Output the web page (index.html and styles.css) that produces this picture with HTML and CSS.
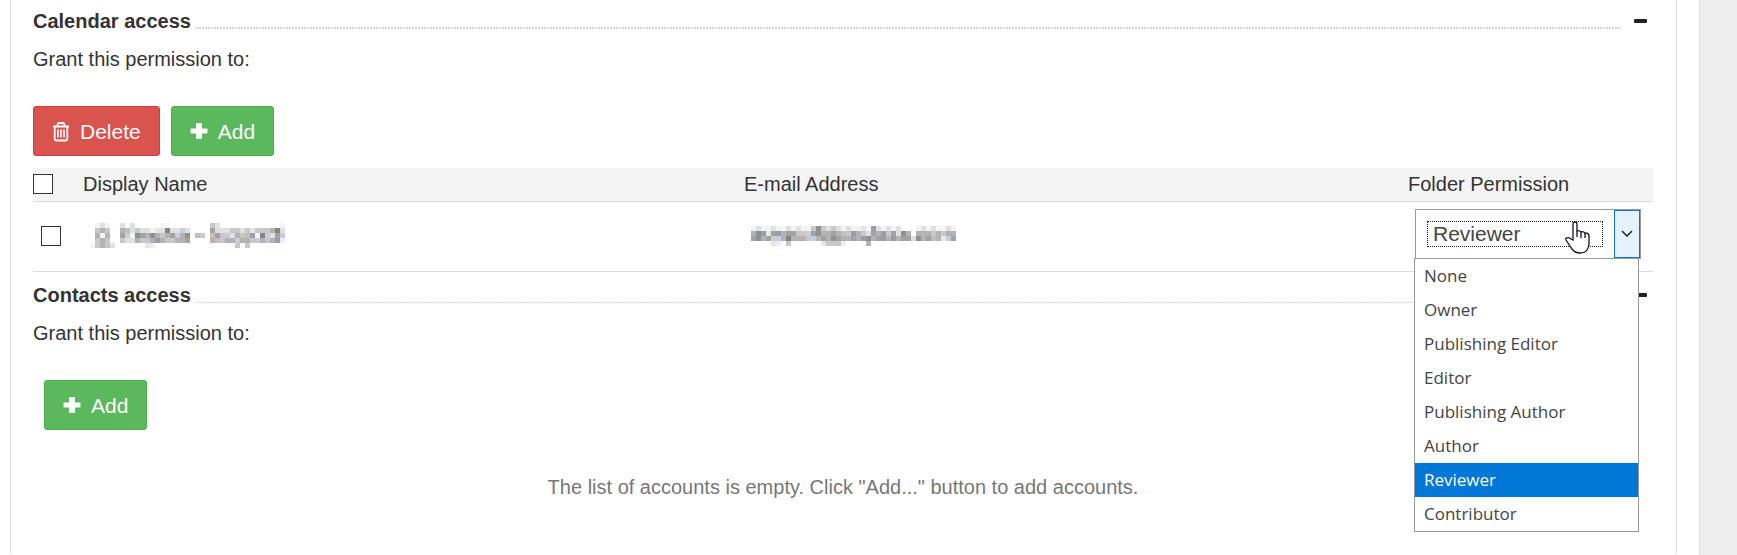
FILE: index.html
```
<!DOCTYPE html>
<html lang="en">
<head>
    <meta charset="UTF-8">
    <meta name="viewport" content="width=device-width, initial-scale=1.0">
    <title>Folder permissions</title>
    <link rel="stylesheet" href="styles.css">
</head>
<body>
    <main class="page">
        <div class="panel">
            <section class="section">
                <div class="section-head">
                    <h2>Calendar access</h2>
                    <span class="dots"></span>
                    <button class="collapse" type="button" aria-label="Collapse calendar access"></button>
                </div>
                <p class="hint">Grant this permission to:</p>
                <div class="toolbar">
                    <button class="btn btn-danger" type="button">
                        <svg class="icon" viewBox="0 0 18 20" aria-hidden="true" fill="none" stroke="#fff">
                            <path d="M1 4.500h16M5.500 4V3q0-2 2-2h3q2 0 2 2v1" stroke-width="1.800"/>
                            <path d="M2.700 5v11.500q0 2 2 2h8.600q2 0 2-2V5" stroke-width="1.800"/>
                            <path d="M6 7.500v8M9 7.500v8M12 7.500v8" stroke-width="1.600"/>
                        </svg>
                        Delete
                    </button>
                    <button class="btn btn-success" type="button">
                        <svg class="icon" viewBox="0 0 18 20" aria-hidden="true" fill="#fff">
                            <path d="M7 1h4q1 0 1 1v4.500h4.500q1 0 1 1v3q0 1-1 1H12V16q0 1-1 1H7q-1 0-1-1v-4.500H1.500q-1 0-1-1v-3q0-1 1-1H6V2q0-1 1-1z"/>
                        </svg>
                        Add
                    </button>
                </div>
                <table class="accounts">
                    <thead>
                        <tr>
                            <th class="col-check"><input type="checkbox" aria-label="Select all"></th>
                            <th class="col-name">Display Name</th>
                            <th>E-mail Address</th>
                            <th class="col-permission">Folder Permission</th>
                        </tr>
                    </thead>
                    <tbody>
                        <tr>
                            <td><input type="checkbox" aria-label="Select account"></td>
                            <td><svg class="mosaic" id="hiddenName" role="img" aria-label="Hidden name"></svg></td>
                            <td><svg class="mosaic" id="hiddenMail" role="img" aria-label="Hidden address"></svg></td>
                            <td>
                                <div class="dropdown">
                                    <select aria-label="Folder Permission">
                                        <option>None</option>
                                        <option>Owner</option>
                                        <option>Publishing Editor</option>
                                        <option>Editor</option>
                                        <option>Publishing Author</option>
                                        <option>Author</option>
                                        <option selected>Reviewer</option>
                                        <option>Contributor</option>
                                    </select>
                                    <span class="focus-box"></span>
                                    <span class="arrow">
                                        <svg width="12" height="7" viewBox="0 0 12 7" fill="none" stroke="#222" stroke-width="1.500"><path d="M1 1l5 5 5-5"/></svg>
                                    </span>
                                    <ul class="menu">
                                        <li>None</li>
                                        <li>Owner</li>
                                        <li>Publishing Editor</li>
                                        <li>Editor</li>
                                        <li>Publishing Author</li>
                                        <li>Author</li>
                                        <li class="active">Reviewer</li>
                                        <li>Contributor</li>
                                    </ul>
                                    <svg class="pointer" viewBox="0 0 26 33" aria-hidden="true">
                                        <path d="M9 19V3q0-2 2-2t2 2v7q2-1 4 1 2-1 4 1 4 0 4 3V22q0 4-2 7-2 3-7 3-5 0-8-4l-6-9q-1-2 1-2 2-1 4 1z" fill="#fff" stroke="#111122" stroke-width="1.300"/>
                                        <path d="M13 10v6M17 11v6M21 12v5" fill="none" stroke="#111122" stroke-width="1.300"/>
                                    </svg>
                                </div>
                            </td>
                        </tr>
                    </tbody>
                </table>
            </section>

            <section class="section">
                <div class="section-head">
                    <h2>Contacts access</h2>
                    <span class="dots thin"></span>
                    <button class="collapse" type="button" aria-label="Collapse contacts access"></button>
                </div>
                <p class="hint">Grant this permission to:</p>
                <div class="toolbar indent">
                    <button class="btn btn-success" type="button">
                        <svg class="icon" viewBox="0 0 18 20" aria-hidden="true" fill="#fff">
                            <path d="M7 1h4q1 0 1 1v4.500h4.500q1 0 1 1v3q0 1-1 1H12V16q0 1-1 1H7q-1 0-1-1v-4.500H1.500q-1 0-1-1v-3q0-1 1-1H6V2q0-1 1-1z"/>
                        </svg>
                        Add
                    </button>
                </div>
                <p class="empty">The list of accounts is empty. Click "Add..." button to add accounts.</p>
            </section>
        </div>
    </main>
    <script src="mosaic.js"></script>
</body>
</html>
```
FILE: styles.css
```
* { box-sizing: border-box; }
body { margin: 0; min-height: 100vh; display: flex; background: #eee; color: #333; font-family: Arial, 'Liberation Sans', sans-serif; font-size: 20px; line-height: 28px; }
h2, p, ul { margin: 0; padding: 0; }
h2 { font-size: 20px; line-height: 28px; }
button, select { font-family: inherit; }

.page { flex: 1; margin-right: 37px; padding: 0 22px 0 10px; background: #fff; border-right: 1px solid #ddd; }
.panel { padding: 0 23px 54px 22px; border: 1px solid #ddd; border-width: 0 1px; border-radius: 0 0 4px 4px; }

.section { padding-top: 7px; }
.section + .section { padding-top: 9px; }
.section-head { display: flex; align-items: center; gap: 5px; }
.dots { flex: 1; height: 2px; margin: 14px 8px 0 0; background: repeating-linear-gradient(90deg, #d6d6d6 0 2px, #fff 2px 3px); }
.dots.thin { height: 1px; }
.collapse { width: 13px; height: 4px; margin-right: 6px; padding: 0; border: none; border-radius: 1px; background: #222; cursor: pointer; }
.hint { margin-top: 10px; }

.toolbar { display: flex; gap: 11px; margin-top: 33px; }
.toolbar.indent { padding-left: 11px; }
.btn { display: flex; align-items: center; gap: 10px; height: 50px; padding: 1px 18px 0; border: 1px solid; border-radius: 3px; color: #fff; font-size: 21px; cursor: pointer; }
.btn-danger { background: #d9534f; border-color: #d43f3a; }
.btn-success { background: #5cb85c; border-color: #4cae4c; }
.icon { width: 18px; height: 20px; }

.accounts { width: 100%; margin-top: 12px; border-spacing: 0; table-layout: fixed; }
th { height: 34px; padding: 0 0 2px; text-align: left; font-weight: normal; background: #f4f4f4; border-bottom: 1px solid #ddd; }
td { height: 70px; padding: 0 0 2px 7px; border-bottom: 1px solid #ddd; }
.col-check { width: 50px; }
.col-name { width: 661px; }
.col-permission { width: 245px; }
input[type="checkbox"] { appearance: none; display: block; width: 20px; height: 20px; margin: 0; border: 1px solid #333; background: #fff; }
td input[type="checkbox"] { margin-left: 1px; }
.mosaic { display: block; }

.dropdown { position: relative; width: 226px; margin-bottom: 4px; }
.dropdown select { appearance: none; display: block; width: 100%; height: 50px; padding: 0 40px 0 17px; border: 1px solid #999; border-radius: 0; background: #fff; color: #444; font-size: 21px; outline: none; }
.focus-box { position: absolute; top: 12px; right: 38px; bottom: 12px; left: 12px; border: 1px dotted #222; pointer-events: none; }
.arrow { position: absolute; top: 1px; right: 1px; bottom: 1px; width: 26px; display: flex; align-items: center; justify-content: center; background: #e5f1fb; border: 1px solid #0078d7; pointer-events: none; }
.menu { position: absolute; top: 49px; left: -1px; z-index: 1; width: 225px; list-style: none; background: #fff; border: 1px solid #999; color: #444; font-family: 'Open Sans', 'Noto Sans', sans-serif; font-size: 17px; line-height: 34px; }
.menu li { padding-left: 9px; }
.menu .active { background: #0078d7; color: #fff; }
.pointer { position: absolute; top: 12px; left: 149px; z-index: 2; width: 26px; height: 33px; pointer-events: none; }

.empty { margin-top: 43px; text-align: center; color: #777; }
```
FILE: mosaic.js
```
// Hidden account details are drawn as rows of small blocks, one letter per colour
const colours = {
    a: '#f3f4f5', b: '#dfe0e1', c: '#c8c8c9', d: '#b4b3b3', e: '#a3a1a1', f: '#909092',
    g: '#c3cfda', h: '#eee4dc', i: '#8e807a', j: '#e4f0fc', k: '#969eae', l: '#c9bdb5'
};
const size = 5;

function drawMosaic(id, rows) {
    const svg = document.getElementById(id);
    svg.setAttribute('width', Math.max(...rows.map(row => row.length)) * size);
    svg.setAttribute('height', rows.length * size);
    rows.forEach((row, y) => {
        [...row].forEach((cell, x) => {
            if (!colours[cell]) return;
            const rect = document.createElementNS('http://www.w3.org/2000/svg', 'rect');
            rect.setAttribute('x', x * size);
            rect.setAttribute('y', y * size);
            rect.setAttribute('width', size);
            rect.setAttribute('height', size);
            rect.setAttribute('fill', colours[cell]);
            svg.appendChild(rect);
        });
    });
}

drawMosaic('hiddenName', [
    '.aba..b.b.....aa........cb............a',
    '.cdc..dlbcbbahbibbgb....ebbbccbchcccdib',
    '.dad..egafedfdcdegdf.lg.lecgbdclkaigbeg',
    '.cdc..cbbdccdkdccdde....dlcddgddcgdcdkj',
    'acdcb......hj................c.c.......'
]);

drawMosaic('hiddenMail', [
    'abaabaababaacfcbcbabaahakbabab...ababaaba',
    'dfkhekdeeccgefddedlckdcbedkcebfd.dddcdcdd',
    'efdeggdidddcgdedfeddedkfdekdkdeebfdeldhge',
    '....hj.c......hcccj....d.................'
]);
```
